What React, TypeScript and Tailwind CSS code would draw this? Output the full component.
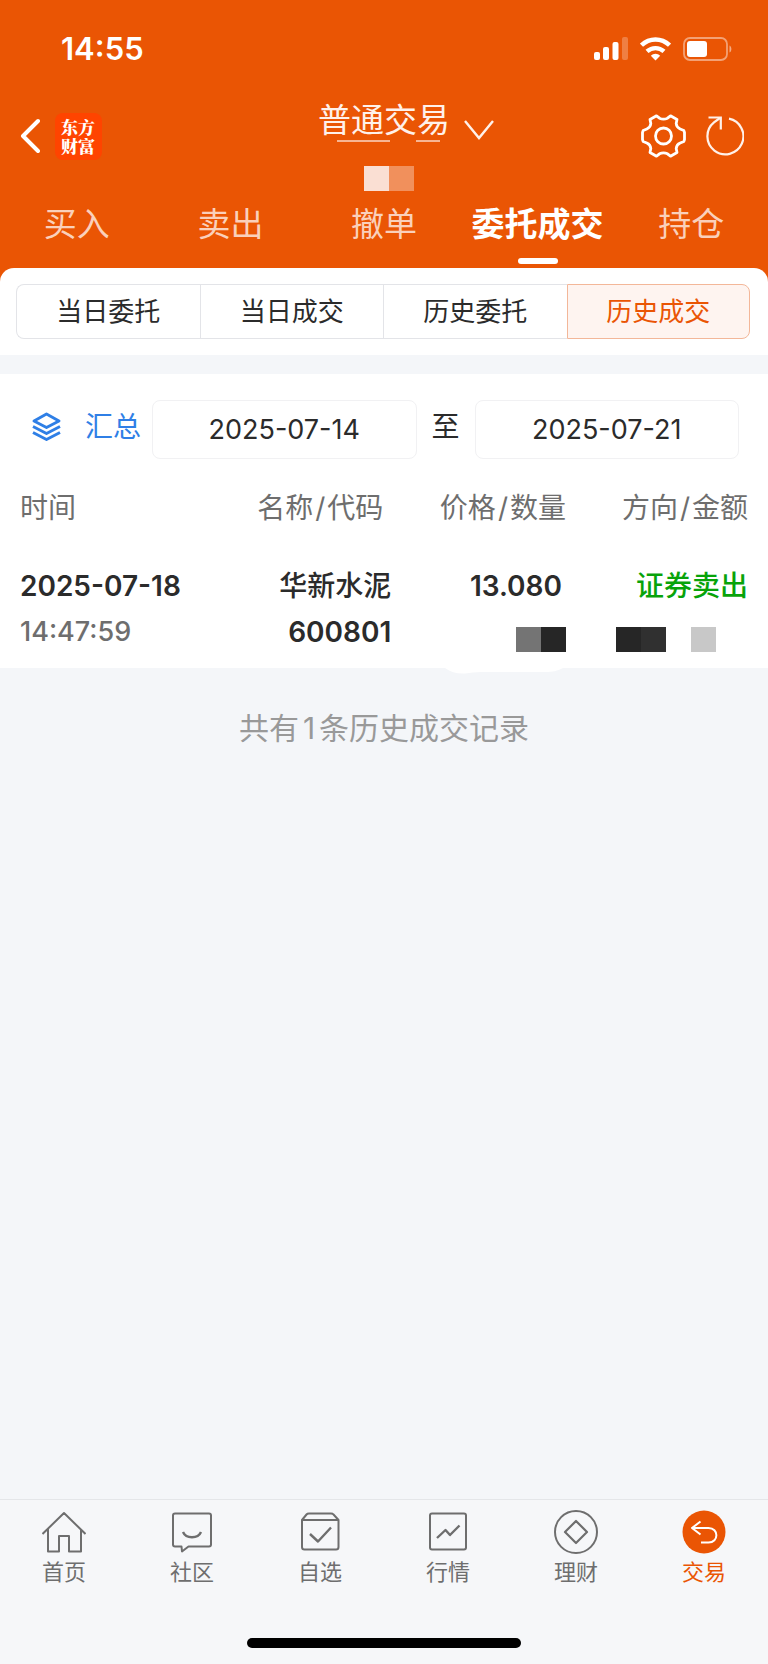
import { useState } from "react";
import type { ReactNode } from "react";

const tabs = ["买入", "卖出", "撤单", "委托成交", "持仓"];
const segments = ["当日委托", "当日成交", "历史委托", "历史成交"];

function StatusBar() {
  return (
    <div className="flex h-[98px] items-center justify-between pl-[61px] pr-9">
      <span className="text-[31px] leading-9 font-semibold">14:55</span>
      <div className="flex items-center gap-3">
        <svg width="34" height="24" viewBox="0 0 34 24" fill="currentColor">
          <rect x="0" y="15" width="6" height="8" rx="2" />
          <rect x="9" y="10" width="6" height="13" rx="2" />
          <rect x="18.500" y="5" width="6" height="18" rx="2" />
          <rect x="28" y="0" width="6" height="23" rx="2" opacity="0.25" />
        </svg>
        <svg width="31" height="24" viewBox="0 0 31 24">
          <g fill="none" stroke="currentColor" strokeWidth="4.4">
            <path d="M1.500 8.200C9.500 0.500 21.500 0.500 29.500 8.200" />
            <path d="M7 14.400C12 10 19 10 24 14.400" />
          </g>
          <path d="M15.500 23.500L10.800 18.800C13.500 16 17.500 16 20.200 18.800Z" fill="currentColor" />
        </svg>
        <svg width="49" height="24" viewBox="0 0 49 24">
          <rect x="1" y="1" width="43" height="22" rx="6" fill="none" stroke="currentColor" strokeWidth="1.800" opacity="0.45" />
          <rect x="4" y="4" width="20" height="16" rx="3" fill="currentColor" />
          <path d="M46.500 8.500C49 9.500 49 14.500 46.500 15.500Z" fill="currentColor" opacity="0.5" />
        </svg>
      </div>
    </div>
  );
}

function Header() {
  return (
    <div className="grid grid-cols-[1fr_auto_1fr] items-start">
      <div className="flex h-[76px] items-center gap-[15px] pl-5">
        <button aria-label="返回">
          <svg width="20" height="36" viewBox="0 0 20 36" fill="none" stroke="currentColor" strokeWidth="4" strokeLinecap="round" strokeLinejoin="round">
            <path d="M18 3L3 18L18 33" />
          </svg>
        </button>
        <div className="flex size-[47px] items-center rounded-lg bg-[#ff4400] px-1.5 font-['Noto_Serif_CJK_SC','Noto_Sans_CJK_SC',serif] text-[17px] leading-[19px] font-black">
          东方财富
        </div>
      </div>

      <div className="flex flex-col items-center">
        <button className="flex h-11 items-center gap-3.5 pl-11 text-[33px] leading-11">
          <span className="relative text-[#fff1ea]">
            普通交易
            <svg className="absolute bottom-0 left-0 w-full" height="3" viewBox="0 0 132 3" preserveAspectRatio="none" stroke="#fbd5c2" strokeWidth="1.500">
              <path d="M19 2H72M98 2H122" />
            </svg>
          </span>
          <svg className="mt-5" width="30" height="20" viewBox="0 0 30 20" fill="none" stroke="#fff1ea" strokeWidth="2.400">
            <path d="M1 1L15 18L29 1" />
          </svg>
        </button>
        <div className="mt-6 flex pl-2.5">
          <div className="size-[25px] bg-[#fadfd3]" />
          <div className="size-[25px] bg-[#f1905c]" />
        </div>
      </div>

      <div className="flex h-[76px] items-center justify-end gap-5 pr-6">
        <button aria-label="设置">
          <svg width="45" height="44" viewBox="0 0 45 44" fill="none" stroke="currentColor" strokeWidth="2.800" strokeLinejoin="round">
            <path d="M15.500 1.800L18.500 4.200Q22.500 6.200 26.500 4.200L29.500 1.800L36 5.500L35.200 9.500Q35.500 13.500 39.200 15L42.800 16.500L43.500 18.500V25.500L42.800 27.500L39.200 29Q35.500 30.500 35.200 34.500L36 38.500L29.500 42.200L26.500 39.800Q22.500 37.800 18.500 39.800L15.500 42.200L9 38.500L9.800 34.500Q9.500 30.500 5.800 29L2.200 27.500L1.500 25.500V18.500L2.200 16.500L5.800 15Q9.500 13.500 9.800 9.500L9 5.500Z" />
            <circle cx="22.500" cy="22" r="8" />
          </svg>
        </button>
        <button aria-label="刷新">
          <svg width="38" height="40" viewBox="0 0 38 40" fill="none" stroke="#fff1ea" strokeWidth="2.200">
            <path d="M23 2.700A18 18 0 1 1 8 6.400L14 2" />
            <path d="M2.500 1.500H14.800V13.500" />
          </svg>
        </button>
      </div>
    </div>
  );
}

function LayersIcon() {
  return (
    <svg width="29" height="30" viewBox="0 0 29 30" fill="none" stroke="currentColor" strokeWidth="2.900" strokeLinejoin="round">
      <path d="M14.500 2L27 9L14.500 15.500L2 9Z" />
      <path d="M1 14.500L14.500 21.500L28 14.500" />
      <path d="M1 20.500L14.500 27.500L28 20.500" />
    </svg>
  );
}

function HeadPair({ first, second }: { first: string; second: string }) {
  return (
    <>
      {first}
      <span className="px-0.5">/</span>
      {second}
    </>
  );
}

function NavIcon({ children }: { children: ReactNode }) {
  return (
    <svg width="44" height="44" viewBox="0 0 44 44" fill="none" stroke="currentColor" strokeWidth="2" strokeLinejoin="round">
      {children}
    </svg>
  );
}

const navItems = [
  {
    label: "首页",
    icon: (
      <NavIcon>
        <path d="M.500 24L22 3L43.500 24M6 19V41.500H17V26H27V41.500H39V19" />
      </NavIcon>
    ),
  },
  {
    label: "社区",
    icon: (
      <NavIcon>
        <path d="M5 3.500H39Q41 3.500 41 5.500V34.500Q41 36.500 39 36.500H18.500L12 41.500L11.500 36.500H5Q3 36.500 3 34.500V5.500Q3 3.500 5 3.500Z" />
        <path d="M13 22C16 29 28 29 31 22" strokeWidth="2.400" />
      </NavIcon>
    ),
  },
  {
    label: "自选",
    icon: (
      <NavIcon>
        <path d="M4 10L8.500 4.500Q9.300 3.500 11 3.500H33Q34.700 3.500 35.500 4.500L40.500 10V37Q40.500 39.500 38 39.500H6.500Q4 39.500 4 37ZM4 10H40.500" />
        <path d="M12 24L20 31.500L33 17.500" strokeWidth="2.400" />
      </NavIcon>
    ),
  },
  {
    label: "行情",
    icon: (
      <NavIcon>
        <rect x="4" y="3.500" width="36" height="36" rx="2" />
        <path d="M11 28L19.500 20L24 25L33.500 15.500" strokeWidth="2.400" />
      </NavIcon>
    ),
  },
  {
    label: "理财",
    icon: (
      <NavIcon>
        <circle cx="22" cy="22" r="21" />
        <path d="M22 11L33 22L22 33L11 22Z" strokeWidth="2.200" />
      </NavIcon>
    ),
  },
  {
    label: "交易",
    icon: (
      <NavIcon>
        <circle cx="22" cy="22" r="21.500" fill="#ea5504" stroke="none" />
        <path d="M18.500 11.500L10 18L18.500 24.500M10 18H26.500C37 18 37 32.500 26.500 32.500H19" stroke="#fff" strokeWidth="2" />
      </NavIcon>
    ),
  },
];

export default function App() {
  const [tab, setTab] = useState("委托成交");
  const [segment, setSegment] = useState("历史成交");

  return (
    <div className="flex min-h-screen flex-col bg-[#f4f6f9] font-[Inter,'Noto_Sans_CJK_SC',sans-serif] text-[#2b2b2b]">
      <div className="bg-[#ea5504]">
        <header className="text-white">
          <StatusBar />
          <Header />
          <nav className="grid grid-cols-5 pt-[11px] pb-1">
            {tabs.map((name) => (
              <button key={name} onClick={() => setTab(name)} className="flex flex-col items-center gap-3">
                <span className={name === tab ? "text-[33px] leading-11 font-bold whitespace-nowrap" : "text-[33px] leading-11 text-[#fad0bb]"}>
                  {name}
                </span>
                <span className={name === tab ? "h-1.5 w-10 rounded-sm bg-white" : "h-1.5 w-10"} />
              </button>
            ))}
          </nav>
        </header>

        <div className="rounded-t-[14px] bg-white px-4 py-4">
          <div className="mr-0.5 grid h-[55px] grid-cols-4">
            {segments.map((name) => (
              <button
                key={name}
                onClick={() => setSegment(name)}
                className={
                  name === segment
                    ? "border border-[#f3b799] bg-[#fef4f0] text-[26px] text-[#ea5504] first:rounded-l-lg last:rounded-r-lg"
                    : "border-y border-l border-[#e3e4e8] text-[26px] first:rounded-l-lg last:rounded-r-lg last:border-r"
                }
              >
                {name}
              </button>
            ))}
          </div>
        </div>
      </div>

      <main className="mt-[19px] flex-1">
        <section className="bg-white pt-[26px] pb-3.5">
          <div className="flex items-center pr-[29px] pl-8 text-[28px]">
            <button className="flex items-center gap-6 pb-1.5 text-[#2f7fe6]">
              <LayersIcon />
              <span>汇总</span>
            </button>
            <input
              aria-label="开始日期"
              defaultValue="2025-07-14"
              className="ml-[11px] h-[59px] min-w-0 flex-1 rounded-lg border border-[#f1f1f3] text-center text-[27px]"
            />
            <span className="px-[15px] pb-1.5">至</span>
            <input
              aria-label="结束日期"
              defaultValue="2025-07-21"
              className="h-[59px] min-w-0 flex-1 rounded-lg border border-[#f1f1f3] text-center text-[27px]"
            />
          </div>

          <div className="px-5 pt-[29px]">
            <table className="w-full table-fixed text-right text-[28px] leading-11">
              <thead className="leading-10 text-[#6e6e6e]">
                <tr>
                  <th className="w-[24%] text-left font-normal">时间</th>
                  <th className="w-[27%] pr-2 font-normal">
                    <HeadPair first="名称" second="代码" />
                  </th>
                  <th className="w-[24%] font-normal">
                    <HeadPair first="价格" second="数量" />
                  </th>
                  <th className="w-[25%] font-normal">
                    <HeadPair first="方向" second="金额" />
                  </th>
                </tr>
              </thead>
              <tbody className="align-top">
                <tr>
                  <td className="pt-9 text-left">
                    <div className="font-semibold">2025-07-18</div>
                    <div className="pt-0.5 text-[27px] font-medium text-[#6e6e6e]">14:47:59</div>
                  </td>
                  <td className="pt-9">
                    <div className="font-medium">华新水泥</div>
                    <div className="pt-0.5 font-semibold">600801</div>
                  </td>
                  <td className="pt-9">
                    <div className="pr-1 font-semibold">13.080</div>
                    <div className="flex justify-end pt-[19px]">
                      <div className="size-[25px] bg-[#747474]" />
                      <div className="size-[25px] bg-[#262626]" />
                    </div>
                  </td>
                  <td className="pt-9">
                    <div className="font-medium text-[#08a30a]">证券卖出</div>
                    <div className="flex justify-end pt-[19px] pr-8">
                      <div className="size-[25px] bg-[#262626]" />
                      <div className="size-[25px] bg-[#303030]" />
                      <div className="ml-[25px] size-[25px] bg-[#c8c8c8]" />
                    </div>
                  </td>
                </tr>
              </tbody>
            </table>
          </div>
        </section>
        <div className="flex justify-end pr-[205px]">
          <svg width="118" height="6" viewBox="0 0 118 6" fill="#fff">
            <path d="M0 0C6 4 12 6 20 5.500C26 5 30 4 36 4H100C108 4 112 3 118 0Z" />
          </svg>
        </div>
        <p className="mt-[34px] text-center text-[30px] leading-10 text-[#999999]">
          共有<span className="px-1">1</span>条历史成交记录
        </p>
      </main>

      <footer className="border-t border-[#e4e6e9] bg-[#f6f7f9] pt-2.5 pb-4">
        <nav className="grid grid-cols-6">
          {navItems.map((item) => (
            <a
              key={item.label}
              href="#"
              className={
                item.label === "交易"
                  ? "flex flex-col items-center gap-1 text-[22px] leading-7 text-[#ea5504]"
                  : "flex flex-col items-center gap-1 text-[22px] leading-7 text-[#6e6e6e]"
              }
            >
              {item.icon}
              {item.label}
            </a>
          ))}
        </nav>
        <div className="mx-auto mt-[52px] h-2.5 w-[274px] rounded-full bg-black" />
      </footer>
    </div>
  );
}
